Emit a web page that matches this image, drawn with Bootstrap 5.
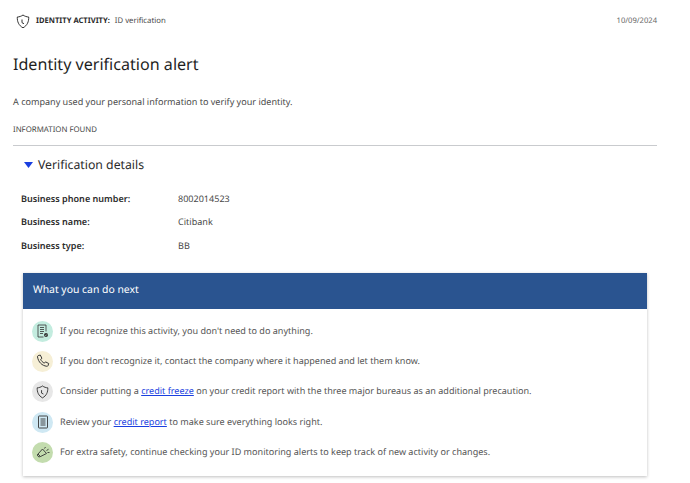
<!DOCTYPE html>
<html lang="en">
<head>
  <meta charset="UTF-8" />
  <title>Identity verification alert</title>
  <meta name="viewport" content="width=device-width, initial-scale=1" />
  <link href="https://cdn.jsdelivr.net/npm/bootstrap@5.3.3/dist/css/bootstrap.min.css" rel="stylesheet" />
  <style>
    body { font-family: "Noto Sans", "Open Sans", sans-serif; color: #4a4a4a; font-size: 9px; background: #fff; text-rendering: geometricPrecision; }
    .alert-page { padding: 0 33px 0 13px; width: 690px; height: 483px; overflow: hidden; }
    .top-bar { height: 43px; padding-left: 3px; }
    .top-bar svg { margin-right: 6px; }
    .activity-label { color: #2b2b2b; font-weight: 700; font-size: 7.6px; margin-right: 5px; }
    .activity-value { font-size: 7.75px; }
    .top-date { font-size: 7.6px; color: #666; }
    .alert-title { font-size: 16.1px; font-weight: 400; color: #1f1f1f; margin: 9px 0 0; line-height: 24px; }
    .alert-intro { font-size: 9.05px; margin: 19px 0 0; line-height: 14px; }
    .found-label { font-size: 7.85px; color: #444; margin-top: 14.500px; line-height: 13px; padding-bottom: 8.500px; border-bottom: 1px solid #c9cbce; }
    .details-head { font-size: 12.25px; color: #2b2b2b; padding-left: 11px; margin-top: 10px; line-height: 18px; gap: 5px; }
    .detail-rows { padding-left: 8px; margin-top: 13px; }
    .detail-row { height: 23.5px; font-size: 9.05px; }
    .detail-name { width: 157px; font-weight: 600; color: #2b2b2b; }
    .next-box { margin: 15px 10px 0 10px; border: 0; border-radius: 0; box-shadow: 0 1px 3px rgba(0,0,0,.25); }
    .next-head { background: #2a5490; color: #fff; font-size: 10.4px; height: 36px; padding: 1px 0 0 10px; border-radius: 0; }
    .next-list { padding: 7px 10px 9px 9px; }
    .next-item { height: 30.3px; gap: 7px; font-size: 9.05px; color: #555; }
    .next-item a { color: #1a3fe0; }
    .tip-icon { width: 21px; height: 21px; border-radius: 50%; flex: none; margin-top: 1px; }
    .tip-green { background: #c3ecdf; }
    .tip-yellow { background: #f6efd6; }
    .tip-grey { background: #e7e7e7; }
    .tip-blue { background: #cfe8f3; }
    .tip-olive { background: #c3dcae; }
  </style>
</head>
<body>
  <div class="alert-page">
    <div class="top-bar d-flex align-items-center">
      <svg width="14" height="15" viewBox="0 0 14 15" fill="none" stroke="#333" stroke-width="1"><path d="M7 1c1.800 1.300 3.700 1.900 5.700 2 .2 4.600-1.400 8.500-5.700 10.800C2.700 11.500 1.100 7.600 1.300 3 3.300 2.900 5.200 2.300 7 1z"/><path d="M6 5.500v3.200l2 1"/></svg>
      <span class="activity-label">IDENTITY ACTIVITY:</span>
      <span class="activity-value">ID verification</span>
      <span class="top-date ms-auto">10/09/2024</span>
    </div>
    <h1 class="alert-title">Identity verification alert</h1>
    <p class="alert-intro">A company used your personal information to verify your identity.</p>
    <div class="found-label">INFORMATION FOUND</div>
    <div class="details-head d-flex align-items-center">
      <svg width="9" height="6" viewBox="0 0 9 6"><path d="M0 0h9L4.500 6z" fill="#1a3fe0"/></svg>
      <span>Verification details</span>
    </div>
    <div class="detail-rows">
      <div class="detail-row d-flex align-items-center"><span class="detail-name">Business phone number:</span><span>8002014523</span></div>
      <div class="detail-row d-flex align-items-center"><span class="detail-name">Business name:</span><span>Citibank</span></div>
      <div class="detail-row d-flex align-items-center"><span class="detail-name">Business type:</span><span>BB</span></div>
    </div>
    <div class="card next-box">
      <div class="next-head d-flex align-items-center">What you can do next</div>
      <div class="next-list">
        <div class="next-item d-flex align-items-center">
          <span class="tip-icon tip-green d-flex align-items-center justify-content-center">
            <svg width="13" height="14" viewBox="0 0 13 14" fill="none" stroke="#333" stroke-width=".8"><path d="M10 7.500V1H2v12h5.500"/><path d="M4 3.500h4M4 5.500h4M4 7.500h4M4 9.500h3"/><circle cx="10" cy="11" r="2" fill="#333" stroke="none"/><path d="M9.100 11l.7.7 1.100-1.300" stroke="#c3ecdf" stroke-width=".6"/></svg>
          </span>
          <span>If you recognize this activity, you don't need to do anything.</span>
        </div>
        <div class="next-item d-flex align-items-center">
          <span class="tip-icon tip-yellow d-flex align-items-center justify-content-center">
            <svg width="14" height="14" viewBox="0 0 13 13" fill="none" stroke="#333" stroke-width=".9"><path d="M2 1.500 4 1l1.500 3-1.200 1c.6 1.500 1.900 2.800 3.500 3.500l1-1.200 3 1.500-.6 2c-.2.500-.7.700-1.200.6C5.500 10.800 2.200 7.500 1.400 2.700c-.1-.5.100-1 .6-1.200z"/></svg>
          </span>
          <span>If you don't recognize it, contact the company where it happened and let them know.</span>
        </div>
        <div class="next-item d-flex align-items-center">
          <span class="tip-icon tip-grey d-flex align-items-center justify-content-center">
            <svg width="13" height="14" viewBox="0 0 14 15" fill="none" stroke="#333" stroke-width="1"><path d="M7 1c1.800 1.300 3.700 1.900 5.700 2 .2 4.600-1.400 8.500-5.700 10.800C2.700 11.500 1.100 7.600 1.300 3 3.300 2.900 5.200 2.300 7 1z"/><path d="M6 5.500v3.200l2 1"/></svg>
          </span>
          <span>Consider putting a <a href="#">credit freeze</a> on your credit report with the three major bureaus as an additional precaution.</span>
        </div>
        <div class="next-item d-flex align-items-center">
          <span class="tip-icon tip-blue d-flex align-items-center justify-content-center">
            <svg width="12" height="14" viewBox="0 0 12 14" fill="none" stroke="#333" stroke-width=".9"><rect x="1.500" y="1" width="9" height="12" rx=".6"/><path d="M3.500 4h5M3.500 6h5M3.500 8h5M3.500 10h5"/></svg>
          </span>
          <span>Review your <a href="#">credit report</a> to make sure everything looks right.</span>
        </div>
        <div class="next-item d-flex align-items-center">
          <span class="tip-icon tip-olive d-flex align-items-center justify-content-center">
            <svg width="14" height="13" viewBox="0 0 14 13" fill="none" stroke="#333" stroke-width=".9"><path d="M2 8 6.500 3l4 4.500-6 3z"/><path d="M2 8l-.8 1 1.600 2 1.700-.5"/><path d="M8.500 2.500 9.500 1M10.500 4.500l2-1.200M11.500 6.500H13.500"/></svg>
          </span>
          <span>For extra safety, continue checking your ID monitoring alerts to keep track of new activity or changes.</span>
        </div>
      </div>
    </div>
  </div>
  <script src="https://cdn.jsdelivr.net/npm/bootstrap@5.3.3/dist/js/bootstrap.bundle.min.js"></script>
</body>
</html>
